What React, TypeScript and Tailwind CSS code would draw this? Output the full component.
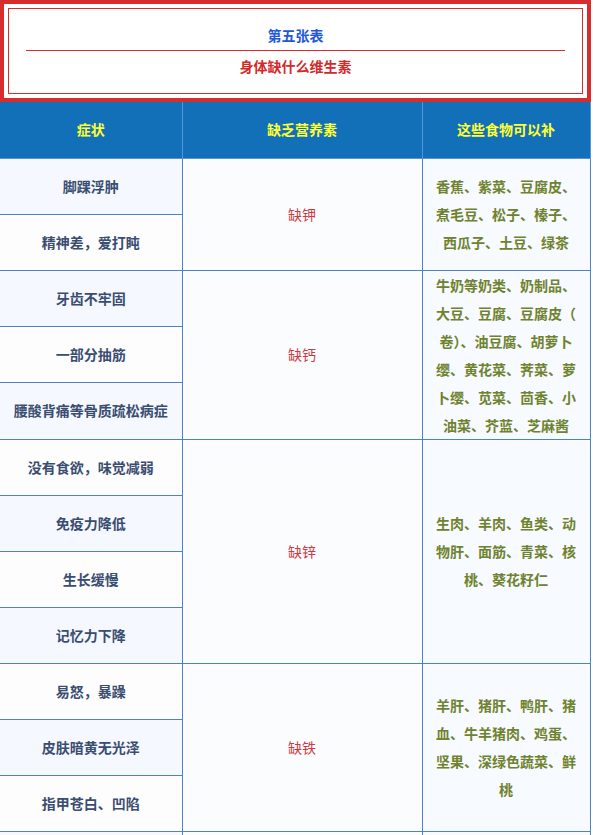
import React from 'react';

type Group = {
  lack: string;
  symptoms: string[];
  foods: string;
};

const groups: Group[] = [
  {
    lack: '缺钾',
    symptoms: ['脚踝浮肿', '精神差，爱打盹'],
    foods: '香蕉、紫菜、豆腐皮、煮毛豆、松子、榛子、西瓜子、土豆、绿茶',
  },
  {
    lack: '缺钙',
    symptoms: ['牙齿不牢固', '一部分抽筋', '腰酸背痛等骨质疏松病症'],
    foods: '牛奶等奶类、奶制品、大豆、豆腐、豆腐皮（卷）、油豆腐、胡萝卜缨、黄花菜、荠菜、萝卜缨、苋菜、茴香、小油菜、芥蓝、芝麻酱',
  },
  {
    lack: '缺锌',
    symptoms: ['没有食欲，味觉减弱', '免疫力降低', '生长缓慢', '记忆力下降'],
    foods: '生肉、羊肉、鱼类、动物肝、面筋、青菜、核桃、葵花籽仁',
  },
  {
    lack: '缺铁',
    symptoms: ['易怒，暴躁', '皮肤暗黄无光泽', '指甲苍白、凹陷'],
    foods: '羊肝、猪肝、鸭肝、猪血、牛羊猪肉、鸡蛋、坚果、深绿色蔬菜、鲜桃',
  },
  {
    lack: '缺维生素A',
    symptoms: ['夜盲症', '皮肤干燥'],
    foods: '胡萝卜、菠菜、动物肝脏、蛋黄、牛奶',
  },
];

const cellBorder = 'border border-[#4d82c4]';

const App: React.FC = () => {
  let rowIndex = 0;

  return (
    <div
      className="w-[591px] bg-white text-[14px] font-bold"
      style={{ fontFamily: '"Noto Sans CJK SC", "Noto Sans", sans-serif' }}
    >
      {/* title box */}
      <div className="border-4 border-[#d92d2d] p-1">
        <div className="border border-[#d92d2d] pt-[16px] pb-[17px] text-center">
          <div className="leading-[20px] text-[#2258d8]">第五张表</div>
          <div className="mx-[17px] mt-[5px] h-px bg-[#d92d2d]" />
          <div className="mt-[5px] leading-[20px] text-[#d42a2a]">身体缺什么维生素</div>
        </div>
      </div>

      <table className="w-[590px] table-fixed border-collapse text-center">
        <colgroup>
          <col className="w-[182px]" />
          <col className="w-[240px]" />
          <col className="w-[168px]" />
        </colgroup>
        <thead>
          <tr className="h-[56px] bg-[#1270b8] text-[#ffff33]">
            <th className="border-r border-b border-[#5b93d3]">症状</th>
            <th className="border-r border-b border-[#5b93d3]">缺乏营养素</th>
            <th className="border-r border-b border-[#5b93d3]">这些食物可以补</th>
          </tr>
        </thead>
        <tbody>
          {groups.map((g) =>
            g.symptoms.map((s, i) => {
              const striped = rowIndex++ % 2 === 0;
              return (
                <tr key={g.lack + s} className="h-[56px]">
                  <td
                    className={`${cellBorder} border-l-0 text-[#3a4d70] ${
                      striped ? 'bg-[#f5f9ff]' : 'bg-[#fdfdfe]'
                    }`}
                  >
                    {s}
                  </td>
                  {i === 0 && (
                    <>
                      <td
                        rowSpan={g.symptoms.length}
                        className={`${cellBorder} bg-[#fbfcfe] font-normal text-[#cc3a45]`}
                      >
                        {g.lack}
                      </td>
                      <td
                        rowSpan={g.symptoms.length}
                        className={`${cellBorder} bg-[#f7faff] px-[12px] leading-[28px] text-[#6f822e] [line-break:anywhere]`}
                      >
                        {g.foods}
                      </td>
                    </>
                  )}
                </tr>
              );
            })
          )}
        </tbody>
      </table>
    </div>
  );
};

export default App;
